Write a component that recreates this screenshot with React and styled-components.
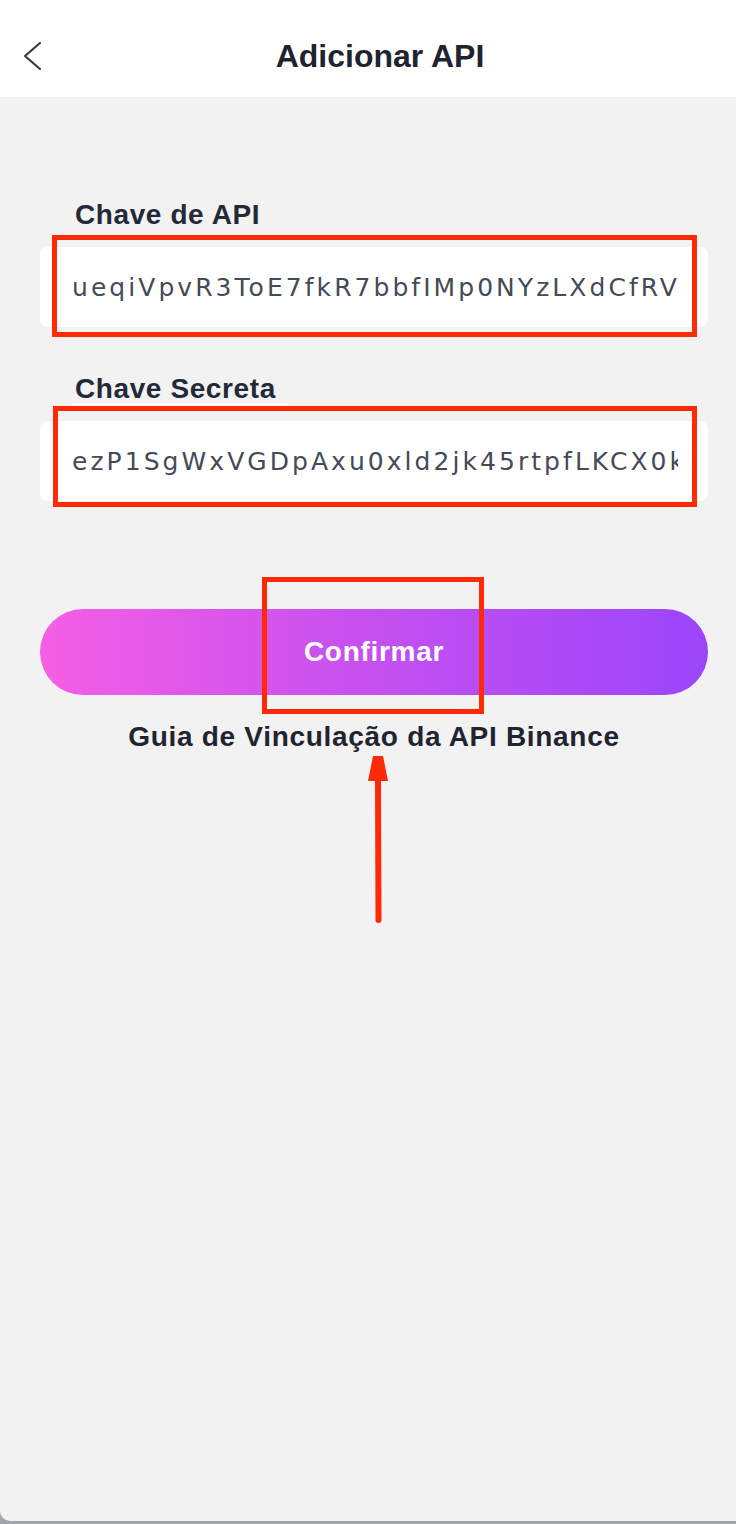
import React from "react";
import styled, { createGlobalStyle } from "styled-components";

const GlobalStyle = createGlobalStyle`
  * {
    box-sizing: border-box;
  }
  body {
    margin: 0;
    background-color: #a2a5a9;
    font-family: "Liberation Sans", Arial, sans-serif;
  }
`;

const RED = "#fe2a06";

const Frame = styled.div`
  height: 1521px;
  background-color: #f2f2f2;
  border-bottom-left-radius: 10px;
  overflow: hidden;
`;

const Header = styled.header`
  height: 97px;
  background-color: #ffffff;
  display: flex;
  align-items: center;
  padding: 14px 22px 0;
`;

const BackButton = styled.button`
  width: 20px;
  height: 30px;
  padding: 0;
  border: none;
  background: none;
  display: flex;
  cursor: pointer;
`;

const Title = styled.h1`
  flex: 1;
  margin: 0;
  padding-left: 4px;
  text-align: center;
  font-size: 32px;
  line-height: 32px;
  font-weight: 700;
  color: #1e2330;
`;

const Main = styled.main`
  position: relative;
  display: flex;
  flex-direction: column;
  gap: 48px;
  padding: 104px 28px 0 40px;
`;

const Field = styled.div`
  display: flex;
  flex-direction: column;
`;

const Label = styled.label`
  align-self: flex-start;
  margin: 0 0 15px 32px;
  padding: 0 12px 0 3px;
  font-size: 28px;
  line-height: 28px;
  font-weight: 700;
  letter-spacing: 0.6px;
  color: #232937;
  border-bottom: 3px solid ${(p) => (p.$underline ? "#ffffff" : "transparent")};
`;

const InputWrap = styled.div`
  position: relative;
`;

const Input = styled.input`
  display: block;
  width: 100%;
  height: 80px;
  padding: 0 30px 0 32px;
  border: none;
  border-radius: 8px;
  background-color: #ffffff;
  font-family: "DejaVu Sans", "Open Sans", sans-serif;
  font-size: 25px;
  letter-spacing: 3.05px;
  color: #444a57;
  outline: none;
`;

const Mark = styled.div`
  position: absolute;
  top: ${(p) => p.$top}px;
  right: ${(p) => p.$right}px;
  bottom: ${(p) => p.$bottom}px;
  left: ${(p) => p.$left}px;
  border: 5px solid ${RED};
  pointer-events: none;
`;

const Actions = styled.div`
  display: flex;
  flex-direction: column;
  align-items: stretch;
  gap: 28px;
  margin-top: 60px;
`;

const ButtonWrap = styled.div`
  position: relative;
`;

const ConfirmButton = styled.button`
  width: 100%;
  height: 86px;
  border: none;
  border-radius: 43px;
  background: linear-gradient(90deg, #f45fe4 0%, #c951ee 45%, #9b45fa 100%);
  font-family: "Liberation Sans", Arial, sans-serif;
  font-size: 28px;
  font-weight: 700;
  letter-spacing: 0.7px;
  color: #ffffff;
  cursor: pointer;
`;

const GuideLink = styled.a`
  text-align: center;
  font-size: 28px;
  line-height: 28px;
  font-weight: 700;
  letter-spacing: 0.7px;
  color: #1f2431;
  text-decoration: none;
`;

const Arrow = styled.svg`
  position: absolute;
  left: 367px;
  top: 658px;
  pointer-events: none;
`;

const fields = [
  {
    label: "Chave de API",
    value: "ueqiVpvR3ToE7fkR7bbfIMp0NYzLXdCfRV",
    mark: { top: -12, right: 11, bottom: -10, left: 12 },
  },
  {
    label: "Chave Secreta",
    value: "ezP1SgWxVGDpAxu0xld2jk45rtpfLKCX0knR",
    underline: true,
    mark: { top: -15, right: 11, bottom: -6, left: 13 },
  },
];

export default function App() {
  return (
    <>
      <GlobalStyle />
      <Frame>
        <Header>
          <BackButton aria-label="Voltar">
            <svg width="20" height="30" viewBox="0 0 20 30">
              <polyline
                points="18,2 3,15 18,28"
                fill="none"
                stroke="#3a3a3a"
                strokeWidth="2.2"
                strokeLinecap="round"
                strokeLinejoin="round"
              />
            </svg>
          </BackButton>
          <Title>Adicionar API</Title>
        </Header>
        <Main>
          {fields.map((field) => (
            <Field key={field.label}>
              <Label $underline={field.underline}>{field.label}</Label>
              <InputWrap>
                <Input defaultValue={field.value} readOnly />
                <Mark
                  $top={field.mark.top}
                  $right={field.mark.right}
                  $bottom={field.mark.bottom}
                  $left={field.mark.left}
                />
              </InputWrap>
            </Field>
          ))}
          <Actions>
            <ButtonWrap>
              <ConfirmButton>Confirmar</ConfirmButton>
              <Mark $top={-32} $right={224} $bottom={-19} $left={222} />
            </ButtonWrap>
            <GuideLink href="#">Guia de Vinculação da API Binance</GuideLink>
          </Actions>
          <Arrow width="22" height="170" viewBox="0 0 22 170">
            <polygon points="6,1 16,1 21,26 1,26" fill={RED} />
            <line
              x1="11"
              y1="24"
              x2="11.5"
              y2="165"
              stroke={RED}
              strokeWidth="6"
              strokeLinecap="round"
            />
          </Arrow>
        </Main>
      </Frame>
    </>
  );
}
